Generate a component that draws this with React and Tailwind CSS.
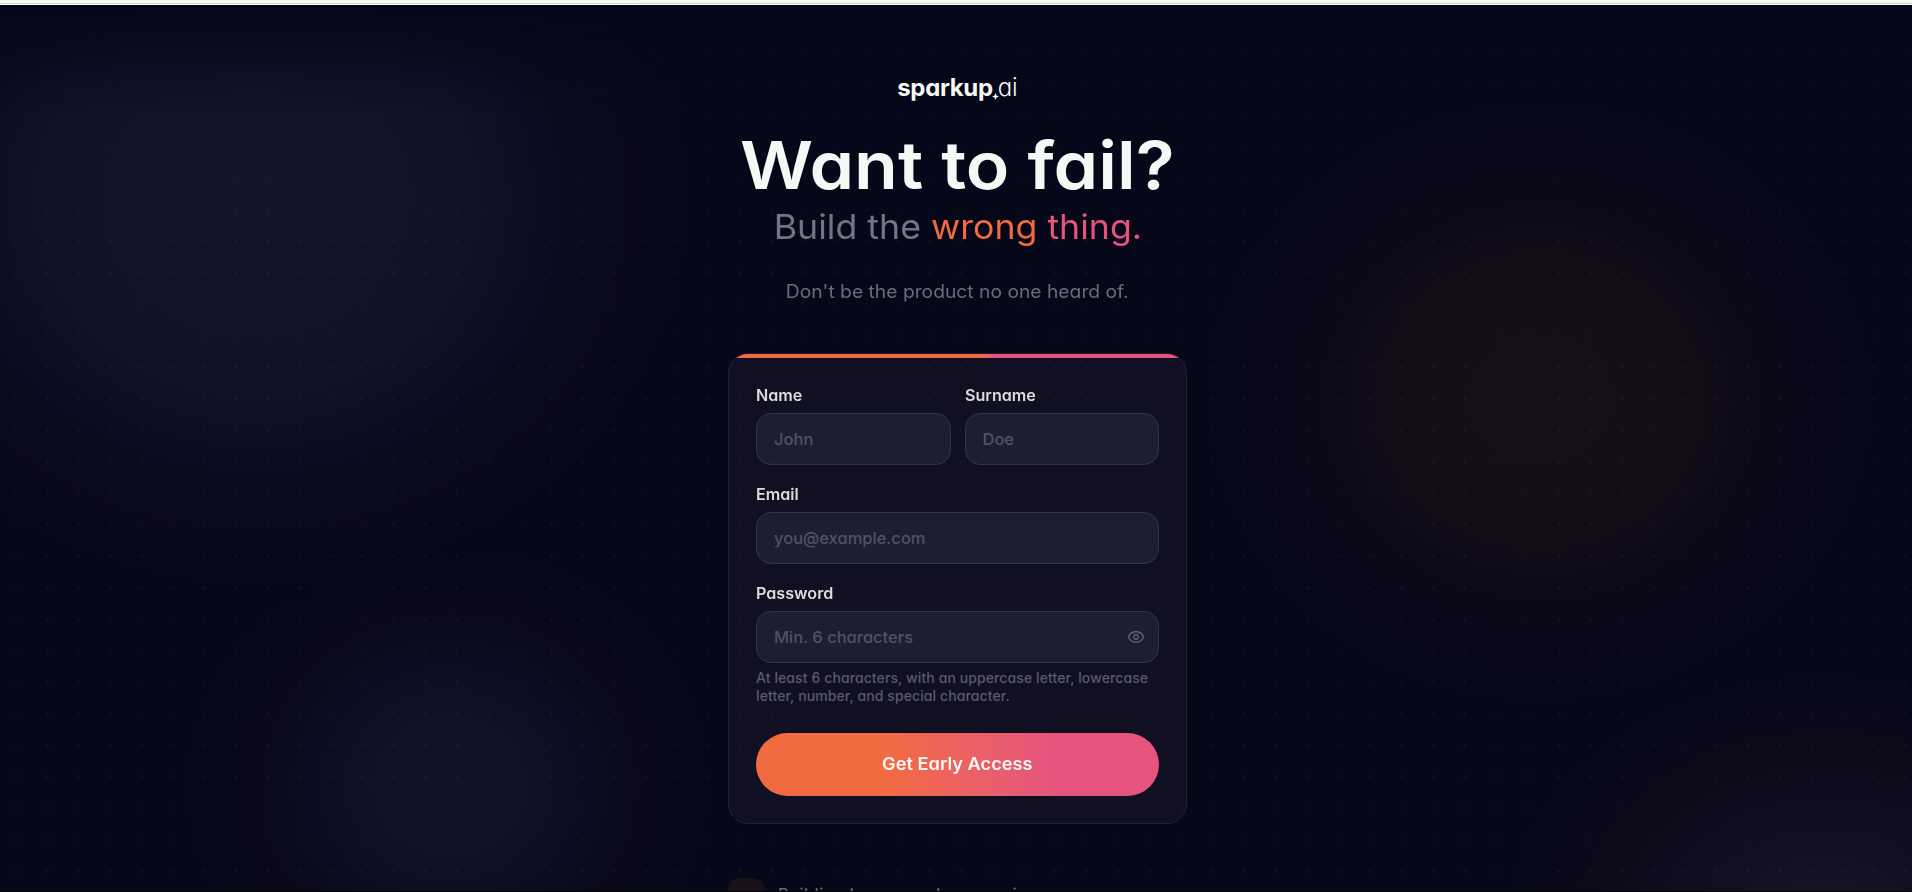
import React, { useState } from "react";
import { Eye, EyeOff } from "lucide-react";

const Field = ({ label, type = "text", placeholder, children }) => (
  <label className="flex min-w-0 flex-1 flex-col gap-[7px]">
    <span className="w-fit origin-left scale-x-[1.04] text-[15.5px] leading-5 font-semibold text-[#dcddda]">
      {label}
    </span>
    <span className="relative flex h-[52px]">
      <input
        type={type}
        placeholder={placeholder}
        className="w-full rounded-[15px] border border-[#353541] bg-[#5c6874]/17 px-[17px] text-[16.5px] font-medium text-white outline-none placeholder:text-[#53525f]"
      />
      {children}
    </span>
  </label>
);

// Soft glows and dot grid behind the page
const Background = () => (
  <div className="pointer-events-none absolute inset-0">
    <div className="absolute inset-0 bg-[radial-gradient(ellipse_450px_400px_at_257px_195px,#141528_0%,#121327_35%,#101125_50%,rgba(11,12,31,0.85)_70%,rgba(11,10,24,0.5)_90%,transparent_100%)] [mask-image:linear-gradient(to_bottom,transparent_0px,rgba(0,0,0,0.35)_35px,rgba(0,0,0,0.75)_75px,black_110px)]" />
    <div className="absolute inset-0 bg-[radial-gradient(ellipse_330px_300px_at_1540px_395px,#160f1a_0%,#140d18_45%,rgba(13,10,24,0.7)_65%,transparent_100%)]" />
    <div className="absolute inset-0 bg-[radial-gradient(ellipse_260px_240px_at_449px_780px,#121326_0%,#111226_25%,rgba(13,14,34,0.85)_50%,rgba(11,10,26,0.5)_75%,transparent_100%)]" />
    <div className="absolute inset-0 bg-[radial-gradient(ellipse_320px_260px_at_1824px_930px,#17182a_0%,rgba(18,17,33,0.9)_35%,rgba(13,11,25,0.6)_75%,transparent_100%)]" />
    <div className="absolute inset-0 bg-[radial-gradient(circle,rgba(255,255,255,0.055)_1px,transparent_1.2px)] bg-[size:31.5px_31.5px] [mask-image:linear-gradient(to_bottom,transparent_20px,rgba(0,0,0,0.6)_120px,black_300px)]" />
  </div>
);

const Logo = () => (
  <div className="flex h-8 items-center text-[24px] leading-8 text-[#f6f8f5]">
    <span className="font-bold tracking-[-0.35px]">sparkup</span>
    <svg viewBox="0 0 10 10" className="mt-[17px] -ml-px h-[7px] w-[7px]" fill="currentColor">
      <path d="M5 0 6.4 3.6 10 5 6.4 6.4 5 10 3.6 6.4 0 5 3.6 3.6Z" />
    </svg>
    <span className="-ml-px font-light">ai</span>
  </div>
);

const SignupCard = () => {
  const [showPassword, setShowPassword] = useState(false);
  const Icon = showPassword ? EyeOff : Eye;

  return (
    <form
      onSubmit={e => e.preventDefault()}
      className="relative mt-[47px] h-[471px] w-[459px] overflow-hidden rounded-[20px] border border-[#22222f] bg-[#333044]/23 px-[27px] pt-8"
    >
      <div className="absolute inset-x-0 top-0 h-1 bg-linear-to-r from-[#f26b40] from-55% to-[#e6547e] to-58%" />
      <div className="flex gap-[14px]">
        <Field label="Name" placeholder="John" />
        <Field label="Surname" placeholder="Doe" />
      </div>
      <div className="mt-5 flex">
        <Field label="Email" type="email" placeholder="you@example.com" />
      </div>
      <div className="mt-5 flex">
        <Field label="Password" type={showPassword ? "text" : "password"} placeholder="Min. 6 characters">
          <button
            type="button"
            onClick={() => setShowPassword(!showPassword)}
            className="absolute inset-y-0 right-[14px] flex items-center text-[#62626f]"
          >
            <Icon size={18} strokeWidth={1.7} />
          </button>
        </Field>
      </div>
      <p className="mt-[6px] text-[14px] leading-[18px] font-medium tracking-[0.1px] whitespace-nowrap text-[#5b5a66]">
        At least 6 characters, with an uppercase letter, lowercase
        <br />
        letter, number, and special character.
      </p>
      <button
        type="submit"
        className="mt-7 h-[63px] w-full rounded-full bg-linear-to-r from-[#f26b40] from-32% to-[#e6547e] to-74% text-[17.5px] font-semibold text-[#faf7f5]"
      >
        <span className="inline-block scale-x-[1.04]">Get Early Access</span>
      </button>
    </form>
  );
};

const App = () => (
  <div className="flex h-[892px] flex-col overflow-hidden bg-[#060718] font-['Inter',sans-serif] text-white [font-feature-settings:'cv11']">
    <div className="h-[5px] shrink-0 border-b border-white bg-[#f5f8f5]">
      <div className="mt-[3px] h-px bg-[#cfd2cf]" />
    </div>
    <main className="relative flex min-h-0 flex-1 flex-col items-center overflow-hidden border-b border-[#020207] pt-[67px] pl-[3px]">
      <Background />
      <div className="relative flex flex-col items-center">
        <Logo />
        <h1 className="mt-[25px] scale-x-[1.085] text-[66px] leading-[72px] font-semibold whitespace-nowrap text-[#f6f8f5]">
          Want to fail?
        </h1>
        <p className="mt-[6px] scale-x-[1.065] text-[33.5px] leading-10 whitespace-nowrap text-[#737585]">
          Build the{" "}
          <span className="bg-linear-to-r from-[#f26b40] from-54% to-[#e6547e] to-58% bg-clip-text text-transparent">
            wrong thing.
          </span>
        </p>
        <p className="mt-[31px] scale-x-[1.07] text-[18px] leading-7 text-[#6b6a79]">
          Don't be the product no one heard of.
        </p>
        <SignupCard />
        <div className="mt-[54px] flex w-[459px] items-center gap-[13px]">
          <div className="flex h-[37px] w-[37px] items-start justify-center rounded-[12px] bg-[#1a1018] pt-[13px] pl-2">
            <div className="h-2 w-[5px] bg-[#f26b40]" />
          </div>
          <p className="pb-[5px] text-[16.5px] leading-6 tracking-[0.5px] text-[#74737f]">
            Building has never been easier.
          </p>
        </div>
      </div>
    </main>
  </div>
);

export default App;
